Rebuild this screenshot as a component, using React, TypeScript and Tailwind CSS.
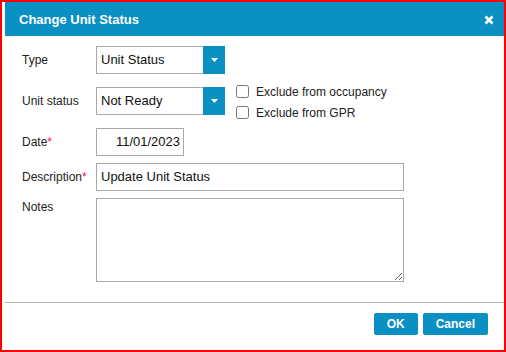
import type { ReactNode } from "react"

const BLUE = "bg-[#0a90c2]"

function Select({ value }: { value: string }) {
    return (
        <div className="flex h-[28px] w-[129px]">
            <div className="flex h-full flex-1 items-center border border-r-0 border-[#aaa9a5] pl-[4px] text-[13px] text-[#111]">
                {value}
            </div>
            <div className={`flex h-full w-[22px] items-center justify-center ${BLUE}`}>
                <svg width="7" height="4" viewBox="0 0 7 4">
                    <path d="M0 0H7L3.5 4Z" fill="#fff" />
                </svg>
            </div>
        </div>
    )
}

function Row({ label, required, children, className = "" }: { label: string, required?: boolean, children: ReactNode, className?: string }) {
    return (
        <div className={`flex ${className}`}>
            <div className="w-[74px] shrink-0 text-[12px] text-[#222]">
                {label}
                {required && <span className="text-[#f0145a]">*</span>}
            </div>
            {children}
        </div>
    )
}

function Check({ label }: { label: string }) {
    return (
        <label className="flex h-[13px] items-center gap-[7px] text-[12px] text-[#222]">
            <input type="checkbox" className="m-0 h-[13px] w-[13px]" />
            {label}
        </label>
    )
}

export default function App() {
    return (
        <div className="flex h-[352px] w-[506px] flex-col border-2 border-[#ff0000] bg-white pl-[3px] font-['Liberation_Sans',Arial,sans-serif]">
            <div className={`flex h-[34px] shrink-0 items-center justify-between pl-[14px] pr-[10px] ${BLUE}`}>
                <span className="mt-[1px] text-[13px] font-bold text-white">Change Unit Status</span>
                <svg width="10" height="10" viewBox="0 0 10 10" className="mt-[1px]">
                    <path d="M1.5 1.5L8.5 8.5M8.5 1.5L1.5 8.5" stroke="#fff" strokeWidth="2.6" />
                </svg>
            </div>

            <div className="flex flex-col pl-[17px] pt-[10px]">
                <Row label="Type" className="h-[28px] items-center">
                    <Select value="Unit Status" />
                </Row>

                <Row label="Unit status" className="mt-[13px] h-[28px] items-center">
                    <Select value="Not Ready" />
                    <div className="ml-[11px] mt-[-2px] flex flex-col gap-[8px] self-start">
                        <Check label="Exclude from occupancy" />
                        <Check label="Exclude from GPR" />
                    </div>
                </Row>

                <Row label="Date" required className="mt-[13px] h-[28px] items-center">
                    <div className="flex h-[28px] w-[88px] items-center justify-end border border-[#aaa9a5] pr-[3px] text-[13px] text-[#111]">
                        11/01/2023
                    </div>
                </Row>

                <Row label="Description" required className="mt-[7px] h-[28px] items-center">
                    <div className="flex h-[28px] w-[308px] items-center border border-[#aaa9a5] pl-[4px] text-[13px] text-[#111]">
                        Update Unit Status
                    </div>
                </Row>

                <Row label="Notes" className="mt-[7px]">
                    <textarea className="h-[84px] w-[308px] border border-[#aaa9a5] outline-none" />
                </Row>
            </div>

            <div className="mt-[20px] h-px bg-[#b4b3af]" />

            <div className="flex justify-end gap-[5px] pr-[16px] pt-[10px]">
                <button className={`h-[22px] rounded-[2px] px-[13px] text-[12px] font-bold text-white ${BLUE}`}>OK</button>
                <button className={`h-[22px] rounded-[2px] px-[13px] text-[12px] font-bold text-white ${BLUE}`}>Cancel</button>
            </div>
        </div>
    )
}
